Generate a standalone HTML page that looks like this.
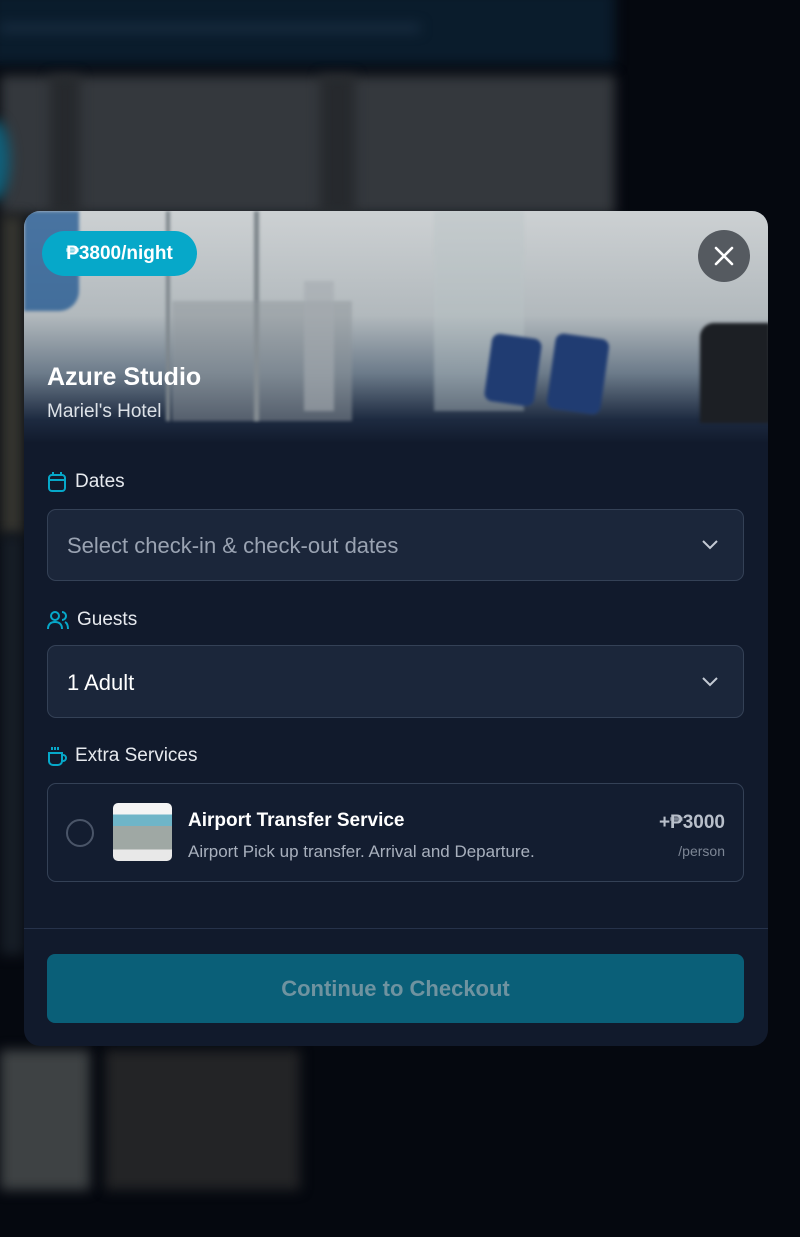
<!DOCTYPE html>
<html><head><meta charset="utf-8"><style>
*{box-sizing:border-box;margin:0;padding:0}
body{width:800px;height:1237px;background:#05080f;position:relative;overflow:hidden;font-family:"Liberation Sans","DejaVu Sans",sans-serif}
.abs{position:absolute}
.blur{filter:blur(6px)}
.modal{position:absolute;left:24px;top:211px;width:744px;height:835px;background:#111a2c;border-radius:16px;overflow:hidden}
.hdr{position:absolute;left:0;top:0;width:744px;height:232px;background:linear-gradient(180deg,#cdd1d3 0%,#b2b9bd 45%,#6c7b8a 70%,#1d2a40 90%,#111a2c 100%);overflow:hidden}
.sh{filter:blur(1.5px)}
.lbl{position:absolute;left:23px;color:#e6e9ee;font-size:19px;display:flex;align-items:center;gap:8px}
.box{position:absolute;left:23px;width:697px;border:1px solid #344156;background:#1b263a;border-radius:9px}
.chev{position:absolute;right:24px;top:50%;margin-top:-6px}
</style></head><body>
<div class="abs blur" style="left:-10px;top:-10px;width:625px;height:75px;background:#0a1c2c"></div>
<div class="abs blur" style="left:0;top:24px;width:420px;height:8px;background:#1a2e42"></div>
<div class="abs blur" style="left:0;top:75px;width:615px;height:140px;background:#34383d"></div>
<div class="abs blur" style="left:50px;top:75px;width:30px;height:140px;background:#26292d"></div>
<div class="abs blur" style="left:320px;top:75px;width:35px;height:140px;background:#26292d"></div>
<div class="abs blur" style="left:-20px;top:120px;width:30px;height:80px;border-radius:50%;background:#12607a"></div>
<div class="abs blur" style="left:0;top:215px;width:24px;height:320px;background:#34342f"></div>
<div class="abs blur" style="left:0;top:535px;width:24px;height:420px;background:#161d26"></div>
<div class="abs blur" style="left:0;top:1050px;width:90px;height:140px;background:#3e4244"></div>
<div class="abs blur" style="left:105px;top:1050px;width:195px;height:140px;background:#232426"></div>

<div class="modal">
  <div class="hdr">
    <div class="abs sh" style="left:0;top:0;width:55px;height:100px;background:#1d5590;opacity:.75;border-radius:0 0 20px 0"></div>
    <div class="abs sh" style="left:142px;top:0;width:4px;height:210px;background:#7e868c"></div>
    <div class="abs sh" style="left:230px;top:0;width:5px;height:210px;background:#7e868c"></div>
    <div class="abs sh" style="left:148px;top:90px;width:180px;height:120px;background:#8f969b;opacity:.5"></div>
    <div class="abs sh" style="left:280px;top:70px;width:30px;height:130px;background:#a5abb0;opacity:.6"></div>
    <div class="abs sh" style="left:410px;top:0;width:90px;height:200px;background:#b9c4c6;opacity:.4"></div>
    <div class="abs sh" style="left:464px;top:125px;width:50px;height:68px;background:#203c72;border-radius:8px;transform:rotate(8deg)"></div>
    <div class="abs sh" style="left:527px;top:125px;width:54px;height:76px;background:#203c72;border-radius:8px;transform:rotate(8deg)"></div>
    <div class="abs sh" style="left:676px;top:112px;width:70px;height:100px;background:#1c1f24;border-radius:14px 0 0 0"></div>
    <div class="abs" style="left:18px;top:20px;width:155px;height:45px;border-radius:23px;background:#06a8c9;color:#fff;font-weight:bold;font-size:19px;line-height:45px;text-align:center">₱3800/night</div>
    <div class="abs" style="left:674px;top:19px;width:52px;height:52px;border-radius:50%;background:#555a60;">
      <svg width="52" height="52"><path d="M18 18L34 34M34 18L18 34" stroke="#fff" stroke-width="2.6" stroke-linecap="round"/></svg>
    </div>
    <div class="abs" style="left:23px;top:152px;color:#fff;font-weight:bold;font-size:25px">Azure Studio</div>
    <div class="abs" style="left:23px;top:190px;color:#dde2e8;font-size:19px">Mariel's Hotel</div>
  </div>

  <div class="lbl" style="top:260px"><svg width="20" height="22" viewBox="0 0 20 22"><rect x="2" y="4" width="16" height="16" rx="3" fill="none" stroke="#06a8c9" stroke-width="2"/><path d="M2 9H18M6 1V5M14 1V5" stroke="#06a8c9" stroke-width="2"/></svg>Dates</div>
  <div class="box" style="top:298px;height:72px"><div class="abs" style="left:19px;top:23px;color:#9aa3b2;font-size:22px">Select check-in &amp; check-out dates</div>
    <svg class="chev" width="18" height="12"><path d="M2 2L9 9L16 2" fill="none" stroke="#c4cad4" stroke-width="2"/></svg></div>

  <div class="lbl" style="top:398px"><svg width="22" height="20" viewBox="0 0 22 20"><circle cx="8" cy="6" r="4" fill="none" stroke="#06a8c9" stroke-width="2"/><path d="M1 19c0-5 3-7 7-7s7 2 7 7M15 2a4 4 0 010 8M18 12c2 1 3 3 3 7" fill="none" stroke="#06a8c9" stroke-width="2"/></svg>Guests</div>
  <div class="box" style="top:434px;height:73px"><div class="abs" style="left:19px;top:24px;color:#fff;font-size:22px">1 Adult</div>
    <svg class="chev" width="18" height="12"><path d="M2 2L9 9L16 2" fill="none" stroke="#c4cad4" stroke-width="2"/></svg></div>

  <div class="lbl" style="top:534px"><svg width="20" height="22" viewBox="0 0 20 22"><path d="M2 8H15V16a4 4 0 01-4 4H6a4 4 0 01-4-4ZM15 10h1a3 3 0 010 6h-1M5 2V5M8 2V5M11 2V5" fill="none" stroke="#06a8c9" stroke-width="2"/></svg>Extra Services</div>
  <div class="box" style="top:572px;height:99px;background:#131d30">
    <div class="abs" style="left:18px;top:35px;width:28px;height:28px;border-radius:50%;border:2px solid #4a5568"></div>
    <div class="abs" style="left:65px;top:19px;width:59px;height:58px;border-radius:5px;background:linear-gradient(180deg,#f4f4f4 0 20%,#6fb5c8 20% 40%,#9fa8a4 40% 80%,#e8e8e8 80%)"></div>
    <div class="abs" style="left:140px;top:26px;color:#fff;font-weight:bold;font-size:19px">Airport Transfer Service</div>
    <div class="abs" style="left:140px;top:58px;color:#a8b0bd;font-size:17px">Airport Pick up transfer. Arrival and Departure.</div>
    <div class="abs" style="right:18px;top:28px;color:#b8bfca;font-weight:bold;font-size:19px">+₱3000</div>
    <div class="abs" style="right:18px;top:59px;color:#7d8695;font-size:14px">/person</div>
  </div>

  <div class="abs" style="left:0;top:717px;width:744px;height:1px;background:#26324a"></div>
  <div class="abs" style="left:23px;top:743px;width:697px;height:69px;border-radius:8px;background:#0a5f78;color:#6f93a0;font-weight:bold;font-size:22px;line-height:70px;text-align:center">Continue to Checkout</div>
</div>
</body></html>
